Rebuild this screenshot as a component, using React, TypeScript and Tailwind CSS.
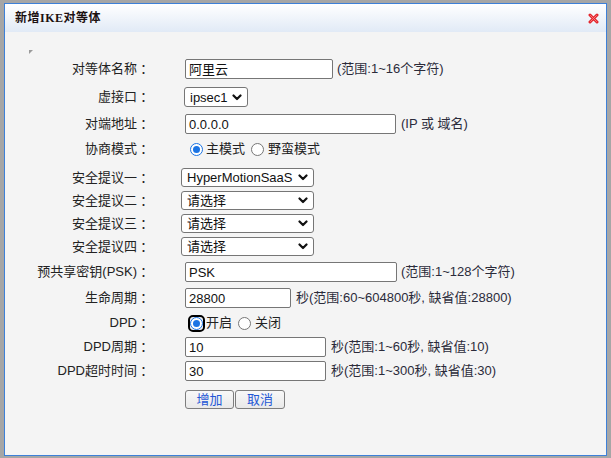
import React from 'react'

const font = { fontFamily: '"Liberation Sans", "Noto Sans CJK SC", sans-serif' }

function Chevron() {
  return (
    <svg width="10" height="7" viewBox="0 0 10 7" className="shrink-0">
      <path d="M1.5 1.5 L5 5 L8.5 1.5" fill="none" stroke="#111" strokeWidth="2.2" strokeLinecap="round" strokeLinejoin="round" />
    </svg>
  )
}

function Select({ value, className }: { value: string; className: string }) {
  return (
    <div
      className={`flex items-center justify-between rounded-[3px] border border-[#767676] bg-white pl-[5px] pr-[5px] text-[13px] leading-none text-[#111] ${className}`}
    >
      <span className="whitespace-nowrap">{value}</span>
      <Chevron />
    </div>
  )
}

function Input({ value, className }: { value: string; className: string }) {
  return (
    <div
      className={`flex h-[20px] items-center rounded-[2px] border border-[#767676] bg-white pl-[3px] text-[13px] leading-none text-[#111] ${className}`}
    >
      {value}
    </div>
  )
}

function Radio({ checked, className = '' }: { checked?: boolean; className?: string }) {
  if (checked) {
    return (
      <span className={`flex h-[13px] w-[13px] shrink-0 items-center justify-center rounded-full border-[1.5px] border-[#1b74e4] bg-white ${className}`}>
        <span className="block h-[7px] w-[7px] rounded-full bg-[#1b74e4]" />
      </span>
    )
  }
  return <span className={`block h-[13px] w-[13px] shrink-0 rounded-full border border-[#767676] bg-white ${className}`} />
}

function Hint({ children, className = '' }: { children: React.ReactNode; className?: string }) {
  return <span className={`whitespace-nowrap text-[13px] text-[#2b2b3a] ${className}`}>{children}</span>
}

function Row({ label, h, children, className = '' }: { label?: string; h: string; children: React.ReactNode; className?: string }) {
  return (
    <div className={`flex items-center ${h} ${className}`}>
      <div className="flex w-[145px] shrink-0 justify-end whitespace-nowrap text-[13px] text-[#222]">
        {label && (
          <>
            <span>{label}</span>
            <span className="w-[13px]" style={{ fontFamily: '"Noto Sans CJK TC", sans-serif' }}>
              ：
            </span>
          </>
        )}
      </div>
      <div className="flex items-center">{children}</div>
    </div>
  )
}

export default function App() {
  return (
    <div className="h-[458px] w-[611px] overflow-hidden bg-[#a6a6a6] pl-[4px] pt-[3px]" style={font}>
      <div className="flex h-[453px] w-[603px] flex-col border border-[#3d80d8] bg-[#f4f4f4]">
        {/* title bar */}
        <div className="flex h-[28px] shrink-0 items-center justify-between bg-gradient-to-b from-[#ffffff] to-[#e1eaf6] pl-[10px] pr-[7px]">
          <span
            className="text-[12px] font-bold tracking-[0.5px] text-[#1c1010]"
            style={{ fontFamily: '"Liberation Serif", "Noto Sans CJK SC", serif' }}
          >
            新增IKE对等体
          </span>
          <svg width="11" height="11" viewBox="0 0 11 11">
            <path d="M2 2 L9 9 M9 2 L2 9" stroke="#e3262d" strokeWidth="3" strokeLinecap="round" />
            <path d="M2.5 2.5 L8.5 8.5 M8.5 2.5 L2.5 8.5" stroke="#f9787c" strokeWidth="1" strokeLinecap="round" />
          </svg>
        </div>

        {/* body */}
        <div className="flex flex-col pt-[18px]">
          <div className="h-[5px] pl-[24px]">
            <svg width="4" height="4" viewBox="0 0 4 4">
              <polygon points="0,0 4,0 0,4" fill="#9a9a9a" />
            </svg>
          </div>

          <Row label="对等体名称" h="h-[28px]">
            <Input value="阿里云" className="ml-[35px] w-[148px]" />
            <Hint className="ml-[4px]">(范围:1~16个字符)</Hint>
          </Row>
          <Row label="虚接口" h="h-[28px]">
            <Select value="ipsec1" className="ml-[34px] h-[20px] w-[64px]" />
          </Row>
          <Row label="对端地址" h="h-[26px]">
            <Input value="0.0.0.0" className="ml-[35px] w-[211px]" />
            <Hint className="ml-[5px]">(IP 或 域名)</Hint>
          </Row>
          <Row label="协商模式" h="h-[24px]">
            <div className="ml-[40px] flex items-center text-[13px] text-[#222]">
              <Radio checked />
              <span className="ml-[3px]">主模式</span>
              <Radio className="ml-[6px]" />
              <span className="ml-[4px]">野蛮模式</span>
            </div>
          </Row>
          <Row label="安全提议一" h="h-[23px]" className="mt-[5px]">
            <Select value="HyperMotionSaaS" className="ml-[31px] h-[19px] w-[133px]" />
          </Row>
          <Row label="安全提议二" h="h-[23px]">
            <Select value="请选择" className="ml-[31px] h-[19px] w-[133px]" />
          </Row>
          <Row label="安全提议三" h="h-[23px]">
            <Select value="请选择" className="ml-[31px] h-[19px] w-[133px]" />
          </Row>
          <Row label="安全提议四" h="h-[23px]">
            <Select value="请选择" className="ml-[31px] h-[19px] w-[133px]" />
          </Row>
          <Row label="预共享密钥(PSK)" h="h-[28px]">
            <Input value="PSK" className="ml-[35px] w-[212px]" />
            <Hint className="ml-[4px]">(范围:1~128个字符)</Hint>
          </Row>
          <Row label="生命周期" h="h-[24px]">
            <Input value="28800" className="ml-[35px] w-[106px]" />
            <Hint className="ml-[5px]">秒(范围:60~604800秒, 缺省值:28800)</Hint>
          </Row>
          <Row label="DPD" h="h-[26px]">
            <div className="ml-[38px] flex items-center text-[13px] text-[#222]">
              <span className="flex h-[17px] w-[17px] items-center justify-center rounded-[5px] border-2 border-black">
                <Radio checked />
              </span>
              <span className="ml-px">开启</span>
              <Radio className="ml-[6px]" />
              <span className="ml-[4px]">关闭</span>
            </div>
          </Row>
          <Row label="DPD周期" h="h-[22px]">
            <Input value="10" className="ml-[35px] w-[141px]" />
            <Hint className="ml-[5px]">秒(范围:1~60秒, 缺省值:10)</Hint>
          </Row>
          <Row label="DPD超时时间" h="h-[26px]">
            <Input value="30" className="ml-[35px] w-[141px]" />
            <Hint className="ml-[5px]">秒(范围:1~300秒, 缺省值:30)</Hint>
          </Row>
          <Row h="h-[31px]">
            <div className="ml-[35px] flex">
              <button className="flex h-[19px] w-[49px] items-center justify-center rounded-[3px] border border-[#7d7d7d] bg-gradient-to-b from-[#f8f8f8] to-[#e9e9e9] text-[13px] leading-none text-[#2457d6]">
                增加
              </button>
              <button className="ml-px flex h-[19px] w-[50px] items-center justify-center rounded-[3px] border border-[#7d7d7d] bg-gradient-to-b from-[#f8f8f8] to-[#e9e9e9] text-[13px] leading-none text-[#2457d6]">
                取消
              </button>
            </div>
          </Row>
        </div>
      </div>
    </div>
  )
}
